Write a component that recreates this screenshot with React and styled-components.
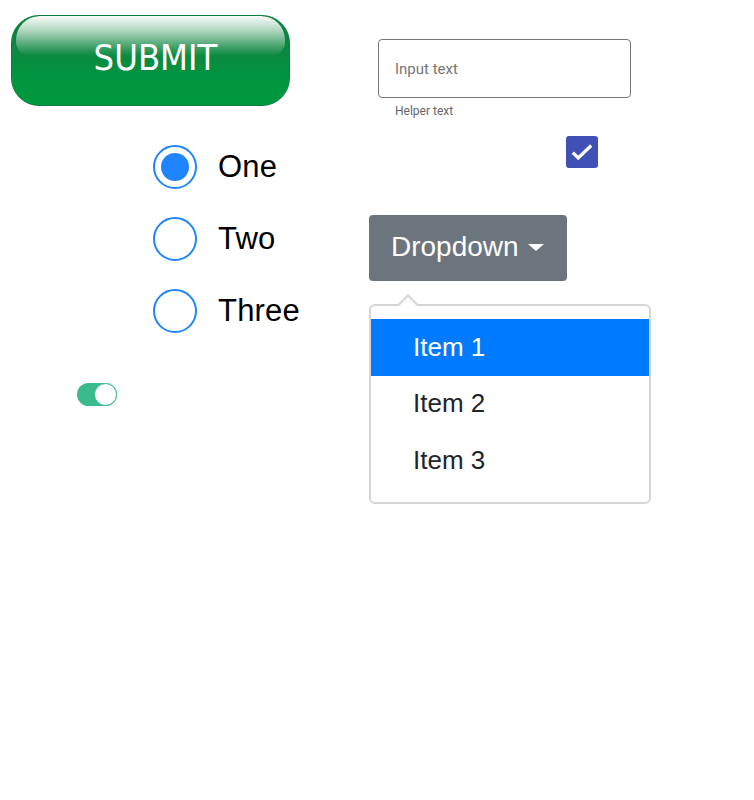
import React from "react";
import styled, { createGlobalStyle } from "styled-components";

const GlobalStyle = createGlobalStyle`
  html, body {
    margin: 0;
    padding: 0;
    background: #fff;
  }
  body {
    font-family: "Liberation Sans", Arial, sans-serif;
  }
`;

const Page = styled.div`
  display: flex;
  width: 754px;
  height: 800px;
`;

const LeftColumn = styled.div`
  display: flex;
  flex-direction: column;
  width: 369px;
`;

const RightColumn = styled.div`
  display: flex;
  flex-direction: column;
  align-items: flex-start;
`;

// Glossy submit button
const SubmitButton = styled.button`
  position: relative;
  margin: 15px 0 0 11px;
  width: 279px;
  height: 91px;
  border: 1px solid #0b7d3a;
  border-radius: 28px;
  background: linear-gradient(#0e7f3d 0%, #0a8a40 45%, #00963f 70%, #00983f 100%);
  color: #fff;
  font-family: "DejaVu Sans Condensed", "DejaVu Sans", sans-serif;
  font-size: 36px;
  padding: 0 0 6px 10px;
  cursor: pointer;
  overflow: hidden;

  &::before {
    content: "";
    position: absolute;
    left: 4px;
    right: 4px;
    top: 0;
    height: 40px;
    border-radius: 24px 24px 14px 14px;
    background: linear-gradient(rgba(255, 255, 255, 0.97) 0%, rgba(235, 244, 238, 0.75) 35%, rgba(200, 225, 210, 0.25) 80%, rgba(255, 255, 255, 0) 100%);
  }

  span {
    position: relative;
  }
`;

const RadioGroup = styled.div`
  display: flex;
  flex-direction: column;
  gap: 28px;
  margin: 39px 0 0 153px;
`;

const RadioRow = styled.label`
  display: flex;
  align-items: center;
  gap: 21px;
  height: 44px;
  font-size: 31px;
  letter-spacing: 0.2px;
  color: #000;
  cursor: pointer;
`;

const RadioCircle = styled.span`
  box-sizing: border-box;
  display: flex;
  align-items: center;
  justify-content: center;
  width: 44px;
  height: 44px;
  border: 2px solid #1f84ff;
  border-radius: 50%;

  &::after {
    content: "";
    width: 28px;
    height: 28px;
    border-radius: 50%;
    background: #1f84ff;
    display: ${(p) => (p.$checked ? "block" : "none")};
  }
`;

const Toggle = styled.span`
  box-sizing: border-box;
  display: flex;
  justify-content: flex-end;
  align-items: center;
  margin: 50px 0 0 77px;
  width: 40px;
  height: 23px;
  border-radius: 12px;
  background: #3bba8c;
`;

const ToggleKnob = styled.span`
  box-sizing: border-box;
  width: 23px;
  height: 23px;
  border-radius: 50%;
  background: #fff;
  border: 1px solid #3bba8c;
`;

const TextField = styled.input`
  box-sizing: border-box;
  margin: 39px 0 0 9px;
  width: 253px;
  height: 59px;
  border: 1px solid #777;
  border-radius: 4px;
  padding: 0 16px;
  font-family: Roboto, sans-serif;
  font-size: 15px;
  color: #333;
  outline: none;

  &::placeholder {
    color: #757575;
  }
`;

const HelperText = styled.div`
  margin: 5px 0 0 26px;
  font-family: Roboto, sans-serif;
  font-size: 12px;
  line-height: 16px;
  color: #666;
`;

const CheckBox = styled.span`
  display: flex;
  align-items: center;
  justify-content: center;
  margin: 17px 0 0 197px;
  width: 32px;
  height: 32px;
  border-radius: 3px;
  background: #3f51b5;
`;

const DropdownButton = styled.button`
  display: flex;
  align-items: center;
  gap: 9px;
  margin-top: 47px;
  width: 198px;
  height: 66px;
  padding: 0 0 2px 22px;
  border: none;
  border-radius: 4px;
  background: #6c757d;
  color: #fff;
  font-family: "Liberation Sans", Arial, sans-serif;
  font-size: 28px;
  cursor: pointer;
`;

const Caret = styled.span`
  width: 0;
  height: 0;
  border-left: 8px solid transparent;
  border-right: 8px solid transparent;
  border-top: 7px solid #fff;
`;

const Menu = styled.div`
  position: relative;
  box-sizing: border-box;
  margin-top: 23px;
  width: 282px;
  height: 200px;
  padding: 13px 0;
  border: 2px solid #d6d6d6;
  border-radius: 6px;
  background: #fff;

  &::before,
  &::after {
    content: "";
    position: absolute;
    left: 27px;
    width: 0;
    height: 0;
    border-left: 10px solid transparent;
    border-right: 10px solid transparent;
  }
  &::before {
    top: -12px;
    border-bottom: 10px solid #d6d6d6;
  }
  &::after {
    top: -9px;
    border-bottom: 10px solid #fff;
  }
`;

const MenuItem = styled.div`
  display: flex;
  align-items: center;
  height: 56.5px;
  padding-left: 42px;
  font-size: 26px;
  color: ${(p) => (p.$active ? "#fff" : "#212529")};
  background: ${(p) => (p.$active ? "#007bff" : "transparent")};
`;

const radios = [
  { label: "One", checked: true },
  { label: "Two", checked: false },
  { label: "Three", checked: false },
];

export default function App() {
  return (
    <Page>
      <GlobalStyle />
      <LeftColumn>
        <SubmitButton>
          <span>SUBMIT</span>
        </SubmitButton>
        <RadioGroup>
          {radios.map((r) => (
            <RadioRow key={r.label}>
              <RadioCircle $checked={r.checked} />
              {r.label}
            </RadioRow>
          ))}
        </RadioGroup>
        <Toggle>
          <ToggleKnob />
        </Toggle>
      </LeftColumn>
      <RightColumn>
        <TextField placeholder="Input text" />
        <HelperText>Helper text</HelperText>
        <CheckBox>
          <svg width="26" height="26" viewBox="0 0 24 24">
            <path d="M3.5 12.5l5 5L20.5 6" fill="none" stroke="#fff" strokeWidth="3" />
          </svg>
        </CheckBox>
        <DropdownButton>
          Dropdown
          <Caret />
        </DropdownButton>
        <Menu>
          <MenuItem $active>Item 1</MenuItem>
          <MenuItem>Item 2</MenuItem>
          <MenuItem>Item 3</MenuItem>
        </Menu>
      </RightColumn>
    </Page>
  );
}
